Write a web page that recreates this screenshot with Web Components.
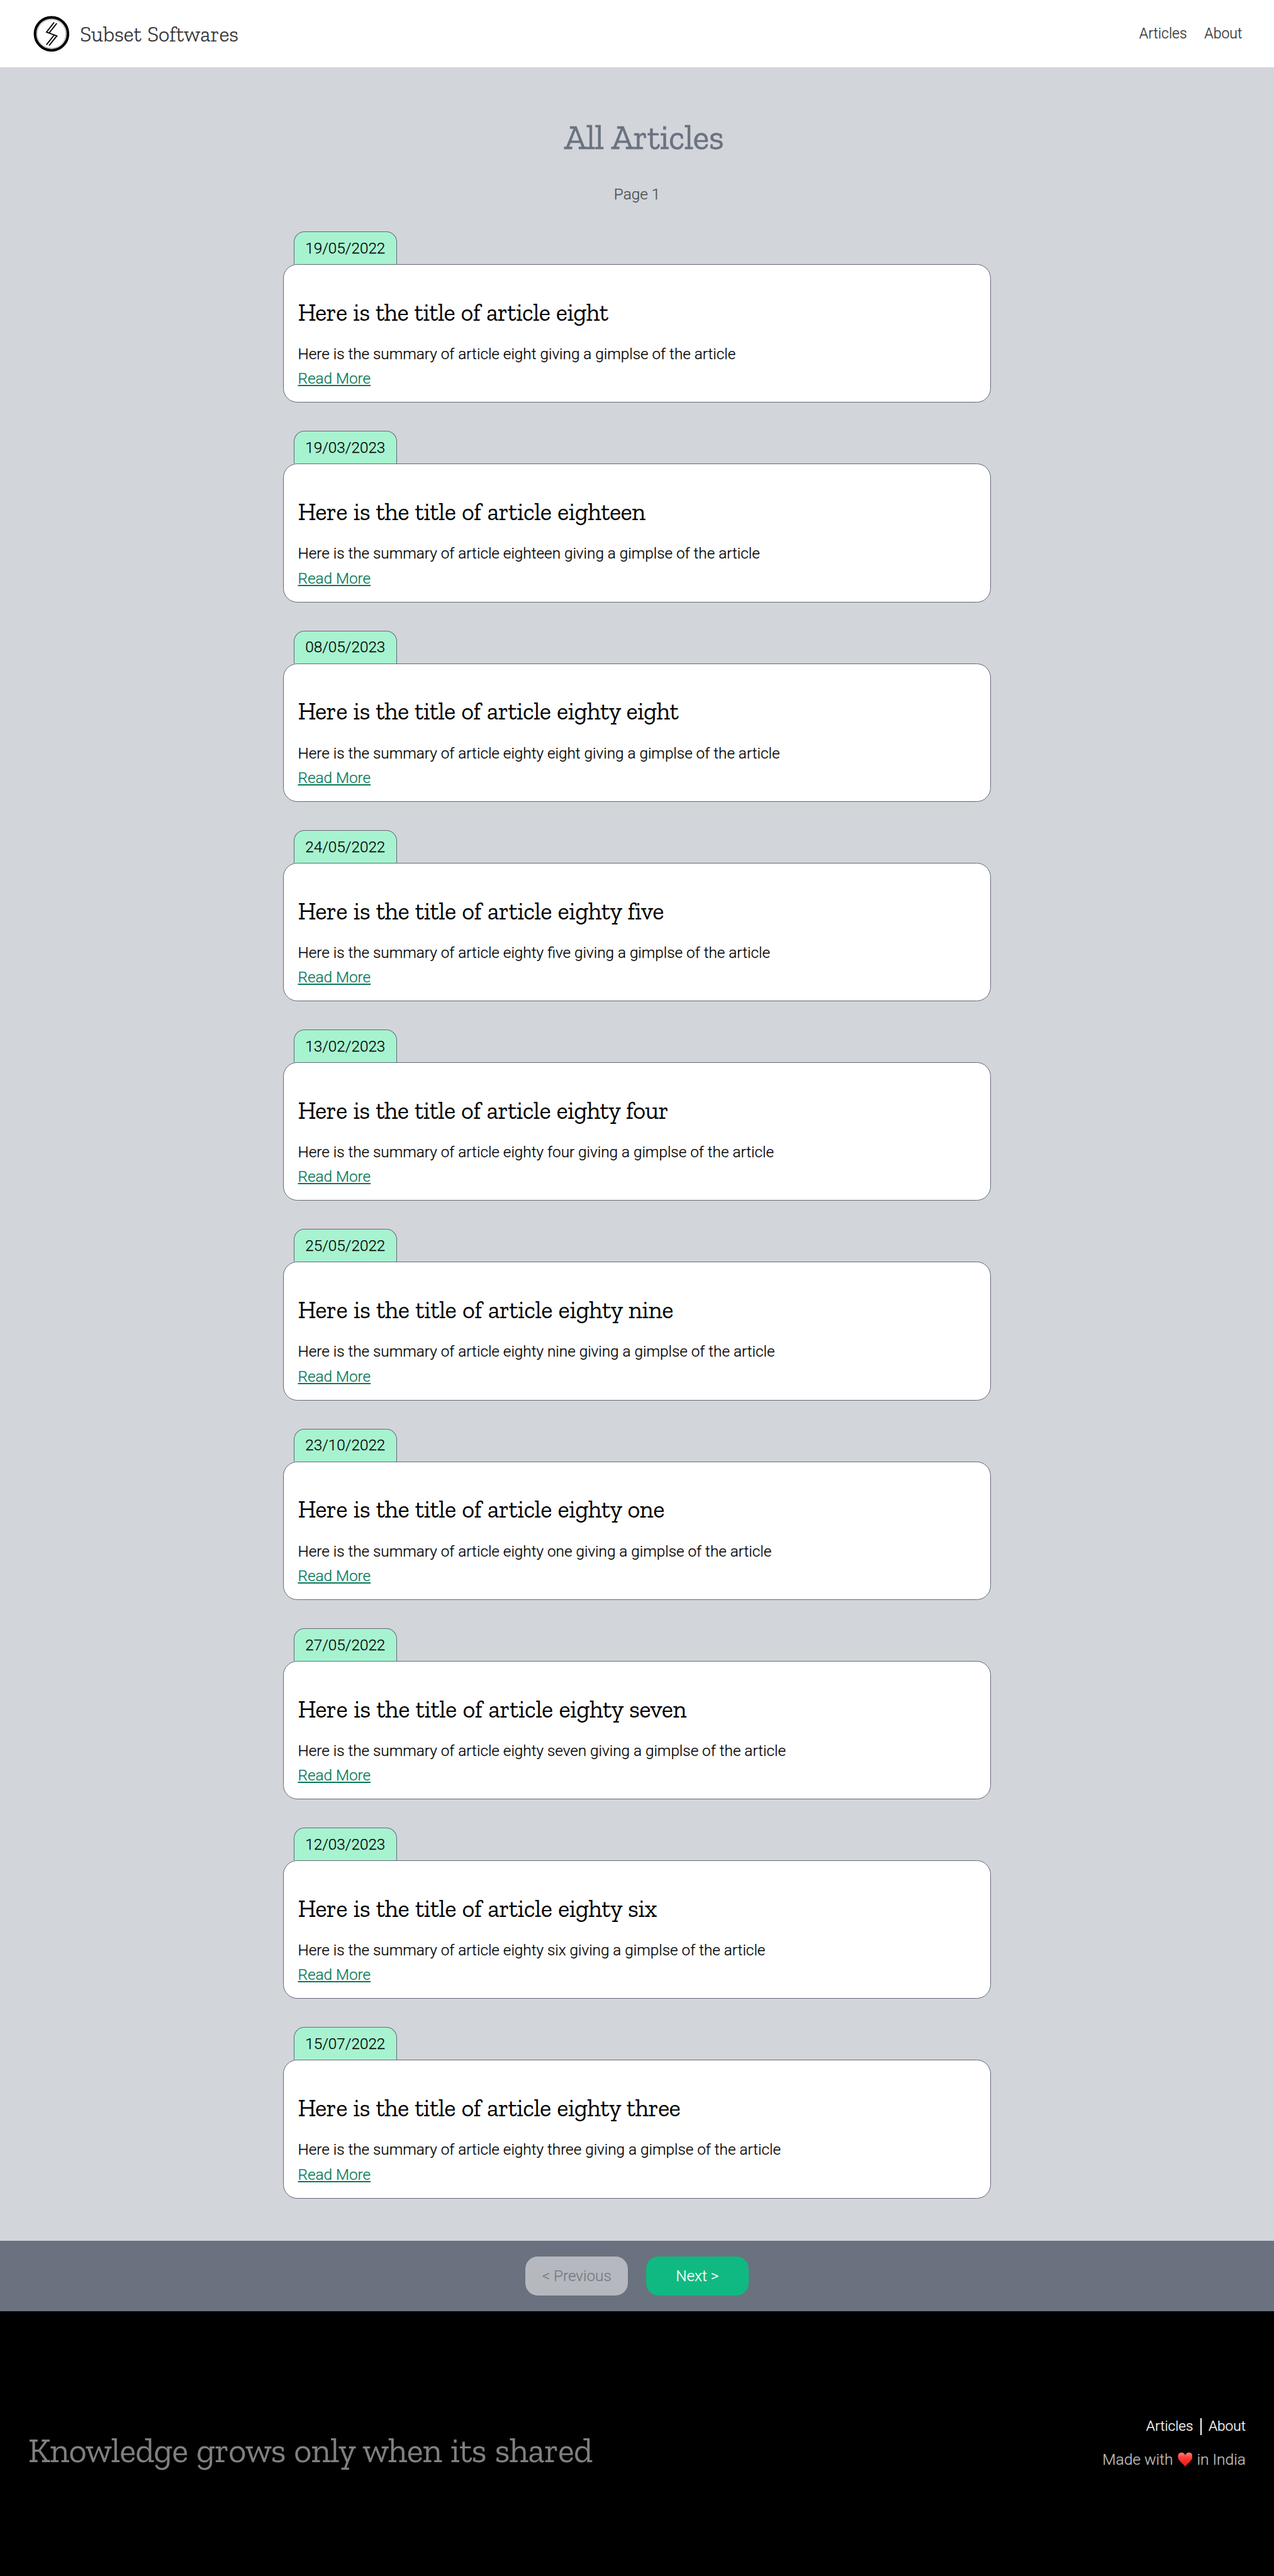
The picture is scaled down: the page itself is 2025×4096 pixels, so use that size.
<!DOCTYPE html>
<html lang="en">
<head>
<meta charset="utf-8">
<title>Subset Softwares</title>
<style>
:root{--u:0.703125px;--slab:"Roboto Slab","Zilla Slab","DejaVu Serif Condensed",serif}
body{margin:0;background:#000;font-family:Roboto,"Open Sans",sans-serif;font-weight:300;font-size:calc(34.56*var(--u));line-height:calc(56*var(--u));color:#000;-webkit-text-stroke:.25px currentColor}
</style>
</head>
<body>
<blog-page></blog-page>
<script>
const U = 0.703125;
const define = (name, html, setup) => customElements.define(name, class extends HTMLElement {
  connectedCallback() {
    if (this.shadowRoot) return;
    const root = this.attachShadow({ mode: 'open' });
    const t = document.createElement('template');
    t.innerHTML = html;
    root.append(t.content.cloneNode(true));
    if (setup) setup.call(this, root);
  }
});

/* Slab-serif text tracked to a set width, given in layout units */
define('slab-text', `<style>
:host{display:inline-block;font-family:var(--slab);white-space:nowrap;word-spacing:.04em;-webkit-text-stroke:0}
</style><span><slot></slot></span>`, function () {
  const target = parseFloat(this.getAttribute('fit')) * U;
  const n = this.textContent.length;
  const w = this.getBoundingClientRect().width;
  if (target && w) this.style.letterSpacing = ((target - w) / n).toFixed(4) + 'px';
});

define('brand-logo', `<style>
:host{display:block;width:calc(82*var(--u));height:calc(82*var(--u))}svg{display:block;width:100%;height:100%}
</style><svg viewBox="0 0 82 82" fill="none" stroke="#000">
<circle cx="41" cy="41" r="37.2" stroke-width="6"/>
<circle cx="41" cy="41" r="32.6" stroke-width=".7" stroke="#444"/>
<path stroke-width="2.6" d="M47 15.2 29.8 37 53.2 45.6 35.6 67.4M52.9 17.2 36.2 38.4M46.6 44.4 29.6 65.6"/>
</svg>`);

define('site-header', `<style>
:host{display:flex;align-items:center;justify-content:space-between;box-sizing:border-box;height:calc(152*var(--u));padding:0 calc(72*var(--u)) 0 calc(75*var(--u));background:#fff;color:#333}
.brand{display:flex;align-items:center;gap:calc(24*var(--u))}
slab-text{font-size:calc(48.5*var(--u));font-weight:300;-webkit-text-stroke:.2px currentColor;padding-top:calc(2.5*var(--u))}
nav{display:flex;gap:calc(39.5*var(--u));font-size:calc(32.7*var(--u))}
</style><div class="brand"><brand-logo></brand-logo><slab-text fit="358">Subset Softwares</slab-text></div>
<nav><span>Articles</span><span>About</span></nav>`);

define('article-card', `<style>
:host{display:block;height:calc(387.2*var(--u))}
.tab{box-sizing:border-box;width:calc(233*var(--u));height:calc(74*var(--u));margin-left:calc(24*var(--u));border:calc(2*var(--u)) solid #626976;border-bottom:0;border-radius:calc(24*var(--u)) calc(24*var(--u)) 0 0;background:#a7f3d0;display:flex;justify-content:center;align-items:center}
.card{box-sizing:border-box;height:calc(313.2*var(--u));border:calc(2*var(--u)) solid #626976;border-radius:calc(32*var(--u));background:#fff;padding:calc(73.5*var(--u)) calc(32*var(--u)) 0}
.title{height:calc(68*var(--u));line-height:calc(68*var(--u));margin-bottom:calc(32*var(--u));font-size:calc(55*var(--u));font-weight:400}
.more{color:#047857;text-decoration:underline;display:block}
</style><div class="tab"><slot name="date"></slot></div>
<div class="card"><div class="title"><slot name="title"></slot></div><slot name="summary"></slot><span class="more">Read More</span></div>`);

define('article-list', `<style>
:host{display:flex;flex-direction:column;gap:calc(64*var(--u));width:calc(1600*var(--u));margin:calc(56*var(--u)) auto 0}
</style>`, function (root) {
  const items = [
    ['19/05/2022', 'eight', 701], ['19/03/2023', 'eighteen', 785], ['08/05/2023', 'eighty eight', 860],
    ['24/05/2022', 'eighty five', 825], ['13/02/2023', 'eighty four', 837], ['25/05/2022', 'eighty nine', 848],
    ['23/10/2022', 'eighty one', 828], ['27/05/2022', 'eighty seven', 878], ['12/03/2023', 'eighty six', 811],
    ['15/07/2022', 'eighty three', 864]];
  for (const [date, name, fit] of items) {
    const card = document.createElement('article-card');
    card.innerHTML = `<span slot="date">${date}</span><slab-text slot="title" fit="${fit}">Here is the title of article ${name}</slab-text><div slot="summary">Here is the summary of article ${name} giving a gimplse of the article</div>`;
    root.append(card);
  }
});

define('page-button', `<style>
:host{display:flex;align-items:center;justify-content:center;width:calc(232*var(--u));height:calc(88*var(--u));border-radius:calc(28*var(--u));background:#10b981;color:#fff}
:host([disabled]){background:#b5b8bf;color:#777b82}
</style><slot></slot>`);

define('page-nav', `<style>
:host{display:flex;align-items:center;justify-content:center;gap:calc(40.4*var(--u));height:calc(160.3*var(--u));background:#69727e}
</style><page-button disabled>&lt; Previous</page-button><page-button>Next &gt;</page-button>`);

define('heart-icon', `<style>
:host{display:block;width:calc(34*var(--u));height:calc(34*var(--u))}svg{display:block;width:100%;height:100%}
</style><svg viewBox="0 0 34 34"><defs><linearGradient id="g" x1="0" y1="0" x2="0" y2="1"><stop offset="0" stop-color="#ff8a80"/><stop offset=".28" stop-color="#ff4a40"/><stop offset=".6" stop-color="#fb2a26"/><stop offset="1" stop-color="#e01414"/></linearGradient></defs>
<path fill="url(#g)" d="M17 33.5C14.5 27 .5 21 .5 9.8.5 4.5 4 1 8.5 1 12.5 1 15.8 3.3 17 7 18.2 3.3 21.5 1 25.5 1 30 1 33.5 4.5 33.5 9.8 33.5 21 19.5 27 17 33.5Z"/></svg>`);

define('site-footer', `<style>
:host{display:flex;justify-content:space-between;align-items:flex-start;box-sizing:border-box;height:calc(599*var(--u));padding:0 calc(64*var(--u)) 0 calc(63.5*var(--u));background:#000}
.tag{margin-top:calc(267.2*var(--u));height:calc(96*var(--u));line-height:calc(96*var(--u));font-size:calc(78*var(--u));font-weight:400;color:#808080}
.side{display:flex;flex-direction:column;align-items:flex-end;padding-top:calc(242*var(--u));gap:calc(27*var(--u))}
.links{display:flex;height:calc(38*var(--u));line-height:calc(38*var(--u));font-size:calc(32.2*var(--u));color:#fff}
.links span+span{margin-left:calc(16*var(--u));padding-left:calc(16*var(--u));border-left:calc(2.9*var(--u)) solid #fff}
.made{display:flex;align-items:center;gap:calc(10*var(--u));font-size:calc(35*var(--u));color:#bfbfbf}
</style><div class="tag"><slab-text fit="1275">Knowledge grows only when its shared</slab-text></div>
<div class="side"><div class="links"><span>Articles</span><span>About</span></div>
<div class="made"><span>Made with</span><heart-icon></heart-icon><span>in India</span></div></div>`);

define('blog-page', `<style>
:host{display:block}
main{box-sizing:border-box;height:calc(4914.7*var(--u));padding-top:calc(110.5*var(--u));background:#d2d5da}
.h1{height:calc(96*var(--u));line-height:calc(96*var(--u));padding-left:calc(31*var(--u));text-align:center;font-size:calc(78*var(--u));font-weight:400;color:#6b7280}
.h1 slab-text{-webkit-text-stroke:.4px currentColor}
.page{margin-top:calc(53*var(--u));text-align:center;color:#4b4f50}
</style><site-header></site-header><main><div class="h1"><slab-text fit="360">All Articles</slab-text></div><div class="page">Page 1</div><article-list></article-list></main><page-nav></page-nav><site-footer></site-footer>`);
</script>
</body>
</html>
